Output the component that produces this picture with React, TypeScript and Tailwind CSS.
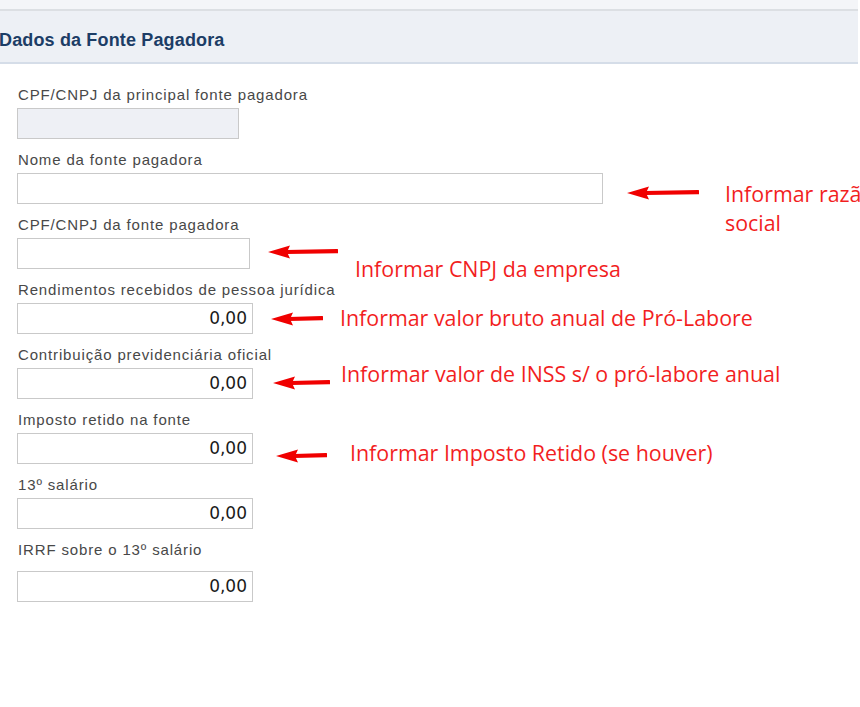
const fields = [
  { label: 'CPF/CNPJ da principal fonte pagadora', width: 'w-[222px]', disabled: true },
  { label: 'Nome da fonte pagadora', width: 'w-[586px]' },
  { label: 'CPF/CNPJ da fonte pagadora', width: 'w-[233px]' },
  { label: 'Rendimentos recebidos de pessoa jurídica', width: 'w-[236px]', value: '0,00' },
  { label: 'Contribuição previdenciária oficial', width: 'w-[236px]', value: '0,00' },
  { label: 'Imposto retido na fonte', width: 'w-[236px]', value: '0,00' },
  { label: '13º salário', width: 'w-[236px]', value: '0,00' },
  { label: 'IRRF sobre o 13º salário', width: 'w-[236px]', value: '0,00', gap: true },
];

// red arrows pointing left, like the ones drawn over the screenshot
function Arrow({ length }: { length: number }) {
  return (
    <svg className="shrink-0" width={length} height={16} viewBox={`0 0 ${length} 16`}>
      <polygon points="0,8 22,1.5 19,8 22,14.5" fill="#f00000" />
      <path d={`M18 8 L${length - 1} 7.2`} stroke="#f00000" strokeWidth={4.2} strokeLinecap="round" />
    </svg>
  );
}

// ax/ay = arrow tip, tx/ty = text left / first line centre
const notes = [
  { ax: 627, ay: 193, len: 72, tx: 725, ty: 193, lines: ['Informar razão', 'social'] },
  { ax: 268, ay: 252, len: 70, tx: 355, ty: 268, lines: ['Informar CNPJ da empresa'] },
  { ax: 271, ay: 319, len: 52, tx: 340, ty: 317, lines: ['Informar valor bruto anual de Pró-Labore'] },
  { ax: 273, ay: 383, len: 57, tx: 341, ty: 373, lines: ['Informar valor de INSS s/ o pró-labore anual'] },
  { ax: 276, ay: 456, len: 51, tx: 350, ty: 452, lines: ['Informar Imposto Retido (se houver)'] },
];

export default function App() {
  return (
    <div className="relative w-[860px] h-[707px] overflow-hidden bg-white font-['Liberation_Sans',Arial,sans-serif]">
      <div className="h-[11px] mr-[2px] bg-[#f4f5f8] border-b-2 border-[#dcdfe3]" />
      <div className="h-[53px] mr-[2px] pt-[8px] flex items-center bg-[#edf0f5] border-b-2 border-[#d5dde8]">
        <h2 className="text-[18px] font-bold text-[#1c3d66] tracking-[0.15px] -ml-[1px]">Dados da Fonte Pagadora</h2>
      </div>

      <div className="pl-[17px] pt-[23px]">
        {fields.map((f) => (
          <div key={f.label} className="mb-[13px]">
            <div className={`h-[16px] leading-[16px] pl-[1px] text-[15px] text-[#484848] tracking-[0.85px] ${f.gap ? 'mb-[13px]' : 'mb-[5px]'}`}>
              {f.label}
            </div>
            <div
              className={`${f.width} h-[31px] border border-[#c9c9c9] flex items-center justify-end pr-[5px] ${f.disabled ? 'bg-[#eef0f5]' : 'bg-white'}`}
            >
              {f.value && (
                <span className="font-['DejaVu_Sans',sans-serif] text-[17px] text-[#1a1a1a]">{f.value}</span>
              )}
            </div>
          </div>
        ))}
      </div>

      {/* annotations drawn over the form */}
      {notes.map((n) => {
        const top = Math.min(n.ay - 8, n.ty - 14);
        return (
          <div
            key={n.lines[0]}
            className="absolute flex items-start font-['Open_Sans',sans-serif] text-[21.4px] leading-[29px] text-[#f21f1f]"
            style={{ left: n.ax, top }}
          >
            <div style={{ marginTop: n.ay - 8 - top }}>
              <Arrow length={n.len} />
            </div>
            <div className="whitespace-nowrap" style={{ marginTop: n.ty - 14 - top, marginLeft: n.tx - n.ax - n.len }}>
              {n.lines.map((l) => (
                <div key={l}>{l}</div>
              ))}
            </div>
          </div>
        );
      })}
    </div>
  );
}
